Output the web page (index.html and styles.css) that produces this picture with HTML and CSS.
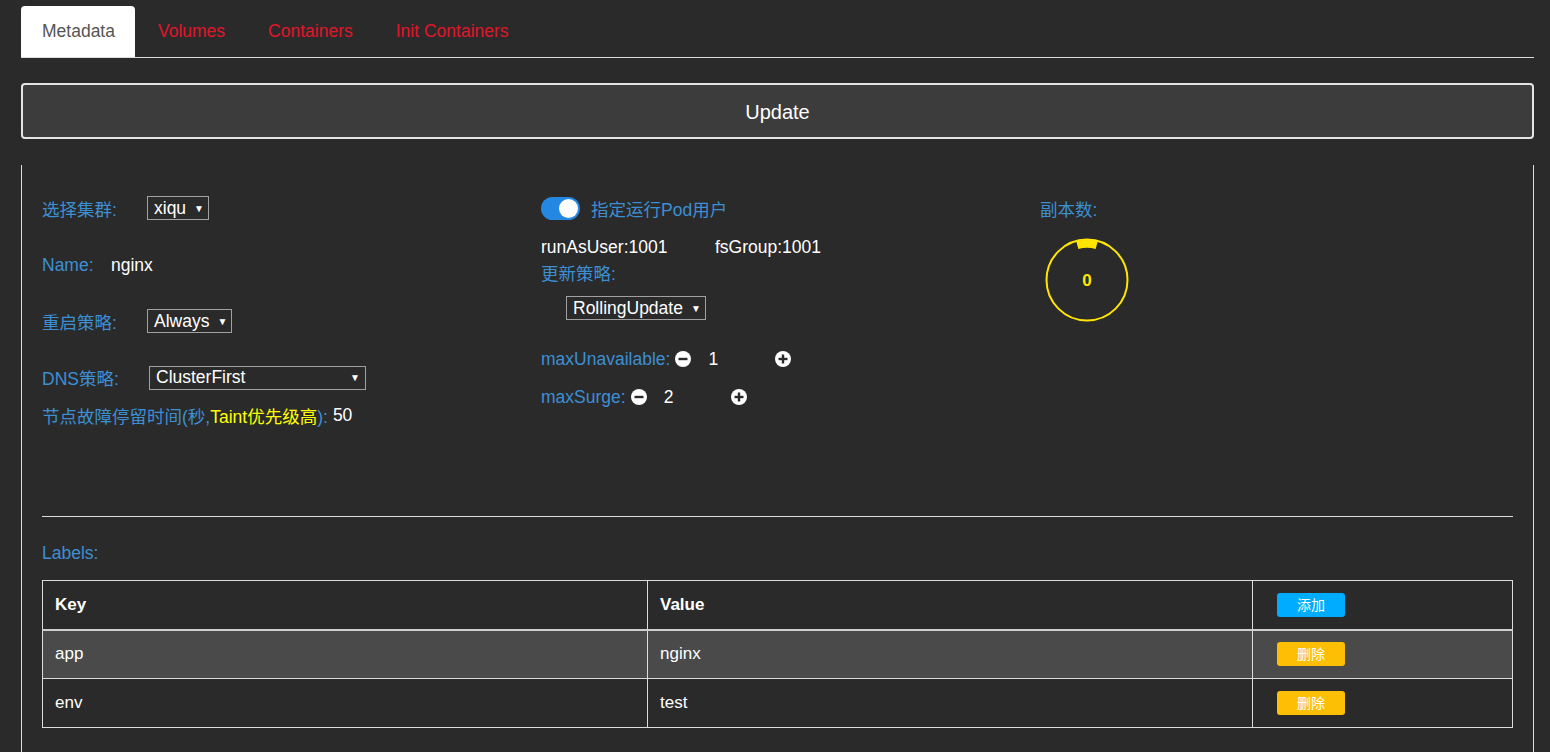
FILE: index.html
```html
<!DOCTYPE html>
<html>
<head>
<meta charset="utf-8">
<link rel="stylesheet" href="styles.css">
</head>
<body>
<div class="page">
  <ul class="tabs">
    <li class="tab active">Metadata</li>
    <li class="tab">Volumes</li>
    <li class="tab">Containers</li>
    <li class="tab">Init Containers</li>
  </ul>
  <button class="update-btn">Update</button>
  <div class="panel">
    <div class="grid">
      <div class="col col-left">
        <div class="row r1"><span class="lbl w105">选择集群:</span><span class="sel s-xiqu">xiqu<span class="caret">▼</span></span></div>
        <div class="row r2"><span class="lbl w69">Name:</span><span class="val">nginx</span></div>
        <div class="row r3"><span class="lbl w105">重启策略:</span><span class="sel s-always">Always<span class="caret">▼</span></span></div>
        <div class="row r4"><span class="lbl w107">DNS策略:</span><span class="sel s-dns">ClusterFirst<span class="caret">▼</span></span></div>
        <div class="row r5"><span class="lbl">节点故障停留时间(秒,<span class="yellow">Taint优先级高</span>):</span><span class="val v50">50</span></div>
      </div>
      <div class="col col-mid">
        <div class="row r1"><span class="toggle"><span class="knob"></span></span><span class="lbl toggle-lbl">指定运行Pod用户</span></div>
        <div class="row m2"><span class="val w174">runAsUser:1001</span><span class="val">fsGroup:1001</span></div>
        <div class="row m3"><span class="lbl">更新策略:</span></div>
        <div class="row m4"><span class="sel s-roll">RollingUpdate<span class="caret">▼</span></span></div>
        <div class="row m5"><span class="lbl">maxUnavailable:</span>
          <svg class="ico" viewBox="0 0 16 16"><circle cx="8" cy="8" r="8" fill="#fff"/><rect x="3.5" y="6.8" width="9" height="2.4" fill="#2a2a2a"/></svg>
          <span class="val num">1</span>
          <svg class="ico" viewBox="0 0 16 16"><circle cx="8" cy="8" r="8" fill="#fff"/><rect x="3.5" y="6.8" width="9" height="2.4" fill="#2a2a2a"/><rect x="6.8" y="3.5" width="2.4" height="9" fill="#2a2a2a"/></svg>
        </div>
        <div class="row m6"><span class="lbl">maxSurge:</span>
          <svg class="ico" viewBox="0 0 16 16"><circle cx="8" cy="8" r="8" fill="#fff"/><rect x="3.5" y="6.8" width="9" height="2.4" fill="#2a2a2a"/></svg>
          <span class="val num">2</span>
          <svg class="ico" viewBox="0 0 16 16"><circle cx="8" cy="8" r="8" fill="#fff"/><rect x="3.5" y="6.8" width="9" height="2.4" fill="#2a2a2a"/><rect x="6.8" y="3.5" width="2.4" height="9" fill="#2a2a2a"/></svg>
        </div>
      </div>
      <div class="col col-right">
        <div class="row r1"><span class="lbl">副本数:</span></div>
        <div class="dial">
          <svg viewBox="0 0 84 84" width="84" height="84">
            <circle cx="42" cy="42" r="40.5" fill="none" stroke="#ffe600" stroke-width="2"/>
            <path d="M 32.3 7.2 A 36 36 0 0 1 51.7 7.2" fill="none" stroke="#ffe600" stroke-width="8"/>
          </svg>
          <span class="dial-num">0</span>
        </div>
      </div>
    </div>
    <hr class="sep">
    <div class="labels-title">Labels:</div>
    <table class="tbl">
      <thead>
        <tr><th class="c1">Key</th><th class="c2">Value</th><th class="c3"><span class="btn add">添加</span></th></tr>
      </thead>
      <tbody>
        <tr class="hl"><td>app</td><td>nginx</td><td class="c3"><span class="btn del">删除</span></td></tr>
        <tr><td>env</td><td>test</td><td class="c3"><span class="btn del">删除</span></td></tr>
      </tbody>
    </table>
  </div>
</div>
</body>
</html>
```
FILE: styles.css
```css
* { box-sizing: border-box; }
html, body { margin: 0; padding: 0; background: #2a2a2a; }
body {
  font-family: "Liberation Sans", Arial, "Noto Sans CJK SC", sans-serif;
  font-size: 17.5px;
  color: #fff;
  overflow: hidden;
  height: 752px;
}
.page { padding: 6px 16px 0 21px; }

.tabs {
  list-style: none;
  margin: 0;
  padding: 0;
  display: flex;
  border-bottom: 1px solid #dcdcdc;
  height: 52px;
}
.tab {
  padding: 0 21px;
  height: 51px;
  line-height: 50px;
  color: #e0162b;
  font-size: 17.5px;
  margin-right: 1px;
}
.tab.active {
  background: #fff;
  color: #555;
  border-radius: 4px 4px 0 0;
  padding: 0 20px 0 21px;
  margin-right: 2px;
}

.update-btn {
  display: block;
  width: 100%;
  height: 56px;
  margin-top: 25px;
  padding: 2px 0 0 0;
  background: #3c3c3c;
  border: 2px solid #e4e4e4;
  border-radius: 4px;
  color: #fff;
  font-family: inherit;
  font-size: 20px;
}

.panel {
  margin-top: 26px;
  border-left: 1px solid #dcdcdc;
  border-right: 1px solid #dcdcdc;
  padding: 31px 20px 0 20px;
  height: 600px;
}

.grid {
  display: grid;
  grid-template-columns: 499px 499px 1fr;
  height: 320px;
}
.col { display: flex; flex-direction: column; }

.row { display: flex; align-items: center; height: 24px; white-space: nowrap; }
.lbl { color: #3d8fd3; }
.yellow { color: #ffff00; }
.val { color: #fff; }
.w105 { width: 105px; }
.w107 { width: 107px; }
.w69 { width: 69px; }
.w174 { width: 174px; }
.v50 { margin-left: 5px; }

.sel {
  display: inline-flex;
  align-items: center;
  justify-content: space-between;
  height: 24px;
  border: 1px solid #a0a0a0;
  padding: 0 5px 0 6px;
  color: #fff;
}
.caret { font-size: 10px; margin-left: 8px; }
.s-xiqu { width: 62px; }
.s-always { width: 85px; }
.s-dns { width: 217px; }
.s-roll { width: 140px; }

.r2 { margin-top: 33px; }
.r3 { margin-top: 32px; }
.r4 { margin-top: 33px; height: 23px; }
.r5 { margin-top: 14px; height: 24px; }

.toggle {
  width: 39px;
  height: 23px;
  border-radius: 12px;
  background: #2488e2;
  position: relative;
  margin-right: 11px;
}
.knob {
  position: absolute;
  right: 2px;
  top: 2px;
  width: 19px;
  height: 19px;
  border-radius: 50%;
  background: #fff;
}
.m2 { margin-top: 16px; height: 22px; }
.m3 { margin-top: 3px; height: 22px; }
.m4 { margin-top: 13px; padding-left: 25px; }
.m5 { margin-top: 27px; }
.m6 { margin-top: 14px; }
.ico { width: 16px; height: 16px; margin-left: 5px; flex: none; }
.num { width: 62px; margin-left: 17px; }

.dial {
  position: relative;
  width: 84px;
  height: 84px;
  margin-top: 18px;
  margin-left: 5px;
}
.dial svg { display: block; }
.dial-num {
  position: absolute;
  left: 0; right: 0; top: 1px; bottom: 0;
  display: flex; align-items: center; justify-content: center;
  color: #ffe600;
  font-weight: bold;
  font-size: 17px;
}

.sep {
  border: 0;
  border-top: 1px solid #dcdcdc;
  margin: 0;
}
.labels-title {
  color: #3d8fd3;
  margin-top: 26px;
  line-height: 20px;
}

.tbl {
  margin-top: 17px;
  width: 100%;
  border-collapse: collapse;
  font-size: 17px;
}
.tbl th, .tbl td {
  border: 1px solid #dcdcdc;
  height: 49px;
  padding: 0 12px;
  text-align: left;
  color: #fff;
}
.tbl th { font-weight: bold; border-bottom: 2px solid #cfcfcf; }
.tbl .c1 { width: 605px; }
.tbl .c2 { width: 605px; }
.tbl .c3 { padding-left: 24px; }
.tbl tr.hl td { background: #4a4a4a; }
.btn {
  display: inline-block;
  width: 68px;
  height: 24px;
  line-height: 24px;
  text-align: center;
  border-radius: 3px;
  font-size: 14px;
  color: #fff;
  font-weight: normal;
  vertical-align: middle;
}
.btn.add { background: #00acff; }
.btn.del { background: #fcbf06; }
```
